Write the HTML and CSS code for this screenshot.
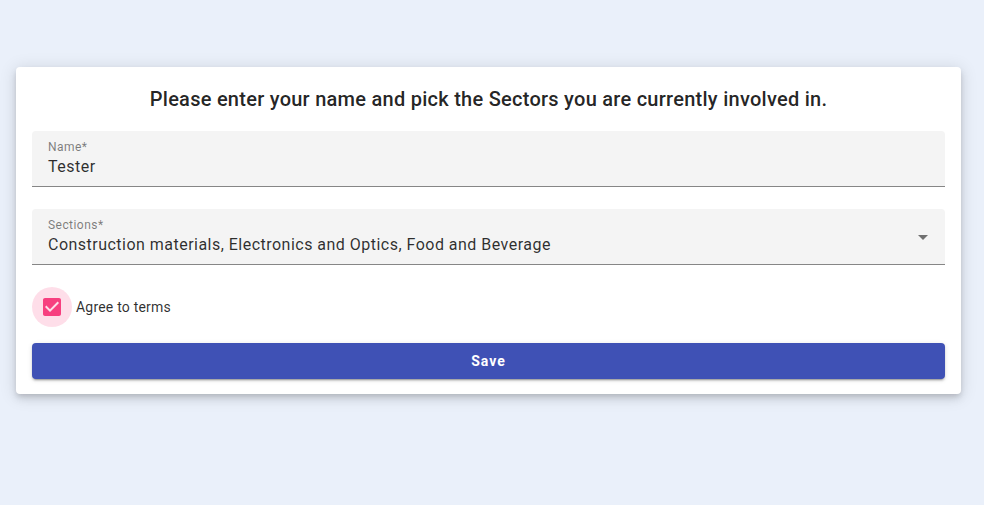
FILE: index.html
```html
<!DOCTYPE html>
<html>
<head>
<meta charset="utf-8">
<link rel="stylesheet" href="styles.css">
</head>
<body>
<main class="page">
  <form class="card">
    <h2 class="title">Please enter your name and pick the Sectors you are currently involved in.</h2>
    <div class="field">
      <span class="label">Name*</span>
      <span class="value">Tester</span>
    </div>
    <div class="field field-select">
      <span class="label">Sections*</span>
      <span class="value">Construction materials, Electronics and Optics, Food and Beverage</span>
      <svg class="arrow" width="24" height="24" viewBox="0 0 24 24"><path d="M7 10l5 5 5-5z" fill="rgba(0,0,0,0.54)"/></svg>
    </div>
    <label class="check-row">
      <span class="check-ripple">
        <svg width="24" height="24" viewBox="0 0 24 24"><path d="M19 3H5c-1.11 0-2 .9-2 2v14c0 1.1.89 2 2 2h14c1.11 0 2-.9 2-2V5c0-1.1-.89-2-2-2zm-9 14l-5-5 1.41-1.41L10 14.17l7.59-7.59L19 8l-9 9z" fill="#f73f7f"/></svg>
      </span>
      <span class="check-text">Agree to terms</span>
    </label>
    <button type="button" class="save">Save</button>
  </form>
</main>
</body>
</html>
```

FILE: styles.css
```css
* { box-sizing: border-box; }
html, body { margin: 0; padding: 0; }
body {
  background: #eaf0fa;
  font-family: Roboto, "Noto Sans", sans-serif;
  width: 984px;
  height: 505px;
  overflow: hidden;
}
.page {
  padding: 67px 23px 0 16px;
}
.card {
  background: #fff;
  border-radius: 4px;
  box-shadow: 0 3px 5px -1px rgba(0,0,0,0.12), 0 5px 8px 0 rgba(0,0,0,0.08), 0 2px 16px 2px rgba(0,0,0,0.1);
  padding: 16px 16px 15px;
  display: flex;
  flex-direction: column;
}
.title {
  margin: 0 0 16px;
  font-size: 20px;
  font-weight: 500;
  line-height: 32px;
  text-align: center;
  color: rgba(0,0,0,0.87);
  letter-spacing: 0.26px;
}
.field {
  position: relative;
  background: #f4f4f4;
  border-top-left-radius: 4px;
  border-top-right-radius: 4px;
  border-bottom: 1px solid rgba(0,0,0,0.45);
  height: 56px;
  padding: 9px 16px 0;
  display: flex;
  flex-direction: column;
}
.field + .field { margin-top: 22px; }
.label {
  font-size: 12px;
  line-height: 14px;
  color: rgba(0,0,0,0.5);
  letter-spacing: 0.45px;
}
.value {
  margin-top: 3px;
  font-size: 16px;
  line-height: 20px;
  color: rgba(0,0,0,0.82);
  letter-spacing: 0.48px;
}
.arrow {
  position: absolute;
  right: 10px;
  top: 16px;
}
.check-row {
  display: flex;
  align-items: center;
  margin-top: 22px;
  height: 40px;
}
.check-ripple {
  width: 40px;
  height: 40px;
  border-radius: 50%;
  background: rgba(245,0,87,0.13);
  display: flex;
  align-items: center;
  justify-content: center;
}
.check-text {
  margin-left: 4px;
  font-size: 14px;
  color: rgba(0,0,0,0.82);
  letter-spacing: 0.2px;
}
.save {
  margin-top: 16px;
  height: 36px;
  border: 0;
  border-radius: 4px;
  background: #3f51b5;
  color: #fff;
  font-family: Roboto, sans-serif;
  font-size: 14px;
  font-weight: 700;
  letter-spacing: 1px;
  box-shadow: 0 3px 1px -2px rgba(0,0,0,0.2), 0 2px 2px 0 rgba(0,0,0,0.14), 0 1px 5px 0 rgba(0,0,0,0.12);
}
```
